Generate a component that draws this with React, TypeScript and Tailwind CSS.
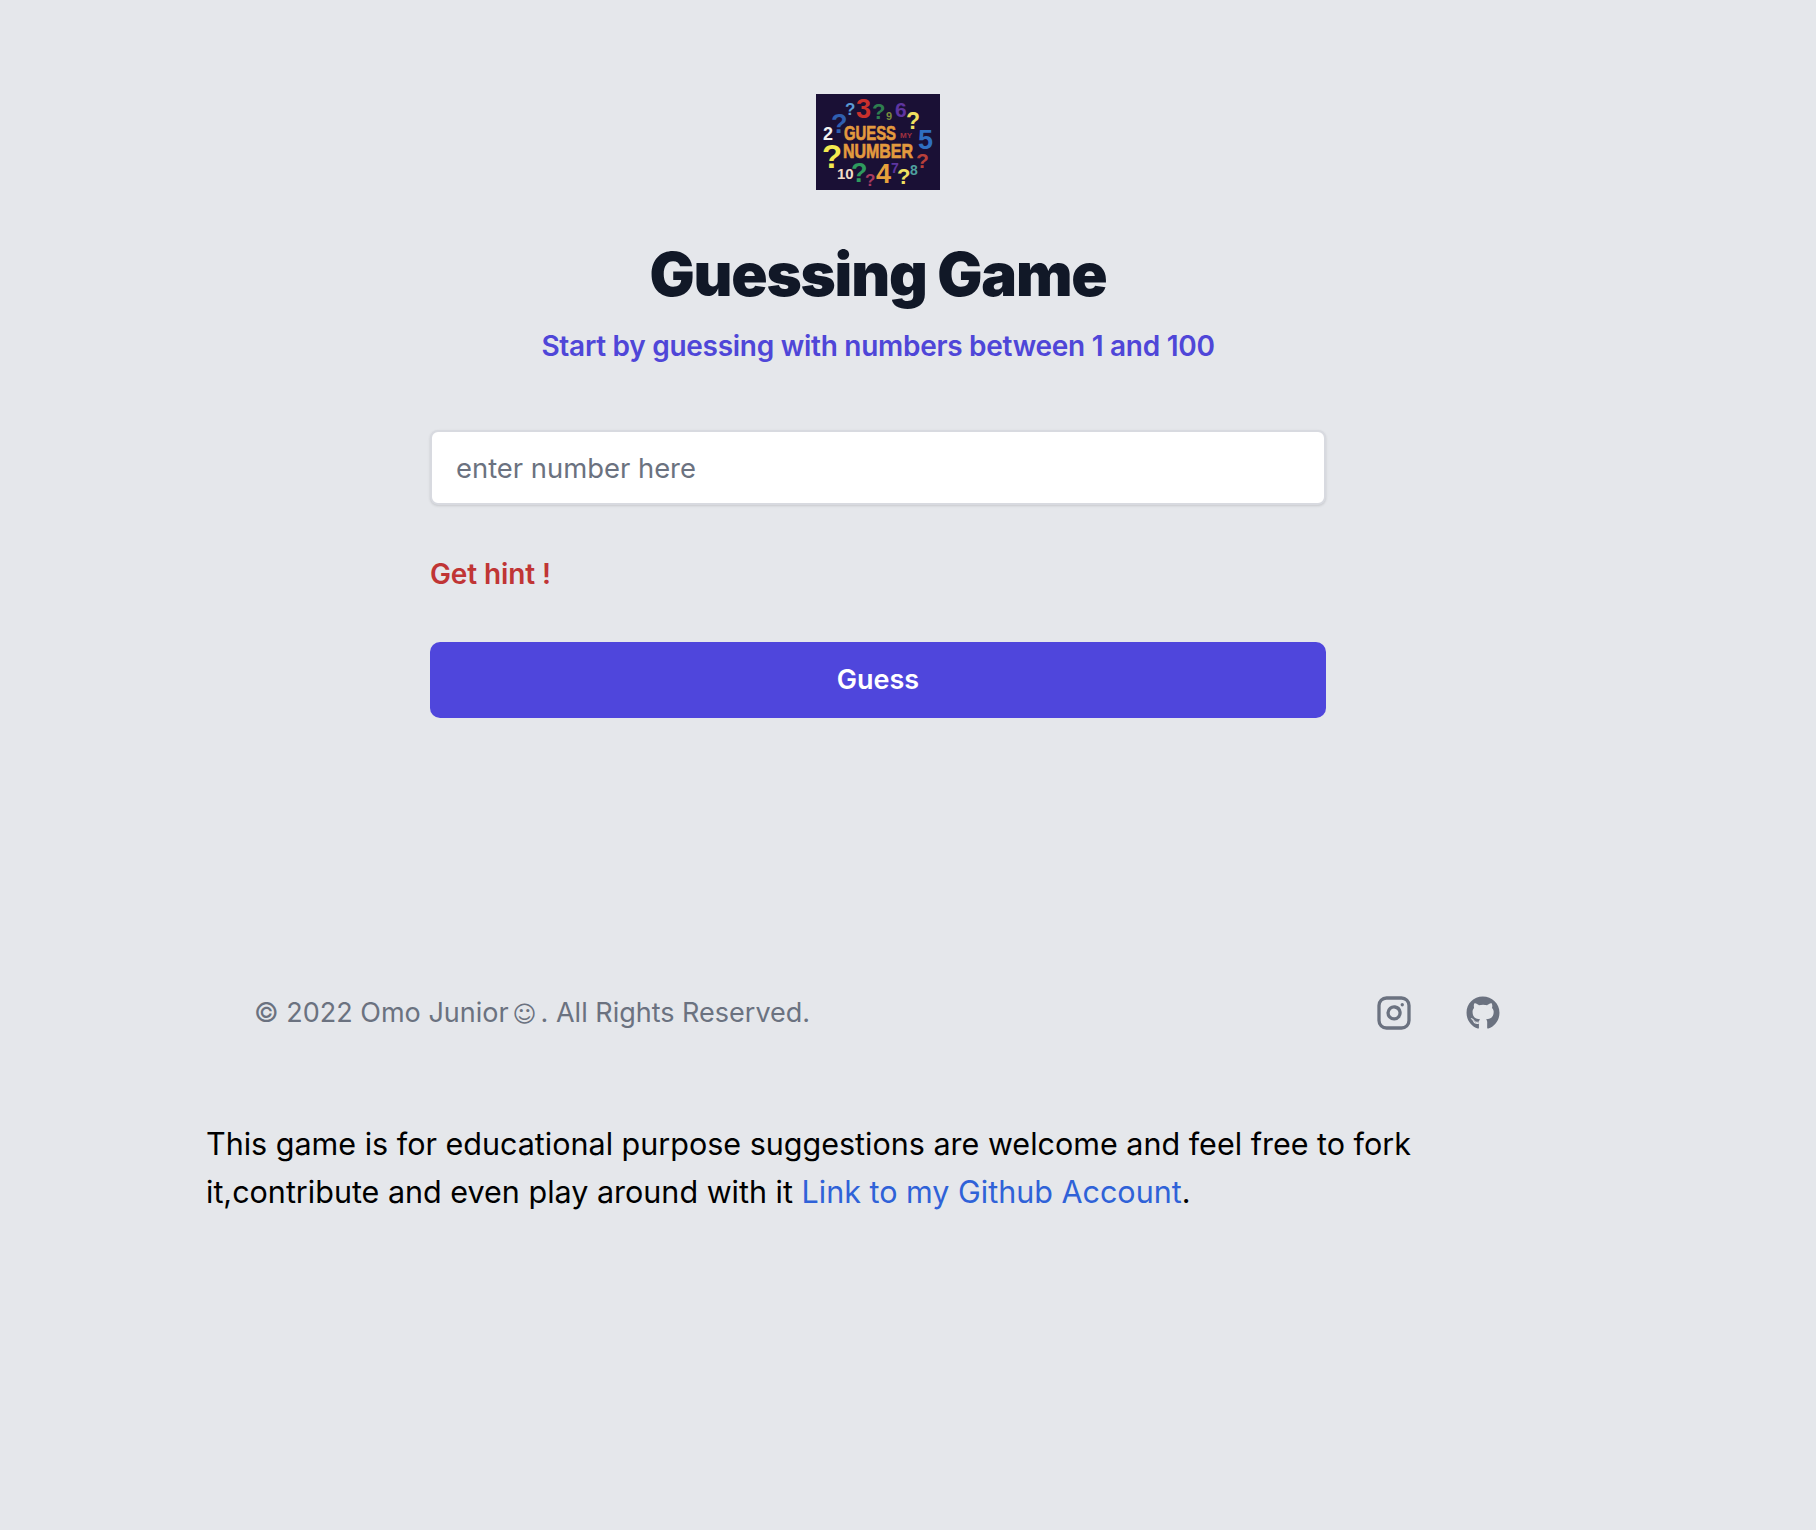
import { Instagram } from 'lucide-react';
import { FaGithub } from 'react-icons/fa';

const glyphs: [string, number, number, number, string][] = [
  ['?', 29, 21, 17, '#5b9bd5'],
  ['3', 40, 24, 27, '#c9302c'],
  ['?', 56, 25, 22, '#2e7d4f'],
  ['9', 70, 26, 11, '#7a8f3c'],
  ['6', 79, 23, 21, '#5e35a0'],
  ['?', 90, 35, 23, '#f0e060'],
  ['?', 15, 39, 27, '#2f5fb0'],
  ['2', 7, 46, 18, '#f2f2f2'],
  ['5', 102, 55, 27, '#2f6fc0'],
  ['?', 6, 74, 33, '#f4ea50'],
  ['?', 100, 74, 21, '#b8403a'],
  ['10', 21, 85, 15, '#f0dcc8'],
  ['?', 35, 88, 27, '#2e9a5e'],
  ['?', 49, 92, 17, '#a83a60'],
  ['4', 60, 89, 27, '#e8a13c'],
  ['7', 75, 79, 14, '#5e35a0'],
  ['?', 81, 90, 22, '#f0e060'],
  ['8', 94, 81, 14, '#4fa0a0'],
];

function Logo() {
  return (
    <svg width="124" height="96" viewBox="0 0 124 96" className="block font-['Liberation_Sans',sans-serif] font-bold">
      <rect width="124" height="96" fill="#1a1035" />
      {glyphs.map(([t, x, y, size, fill], i) => (
        <text key={i} x={x} y={y} fontSize={size} fill={fill}>{t}</text>
      ))}
      <text x="28" y="46" fontSize="21" fill="#e39a3e" stroke="#e39a3e" strokeWidth="0.7" textLength="52" lengthAdjust="spacingAndGlyphs">GUESS</text>
      <text x="84" y="44" fontSize="8" fill="#a03040" textLength="12" lengthAdjust="spacingAndGlyphs">MY</text>
      <text x="27" y="64" fontSize="21" fill="#e39a3e" stroke="#e39a3e" strokeWidth="0.7" textLength="70" lengthAdjust="spacingAndGlyphs">NUMBER</text>
    </svg>
  );
}

export default function App() {
  return (
    <div className="min-h-[1530px] bg-[#e5e7eb] font-['Inter',sans-serif]">
      <main className="flex w-[1756px] flex-col items-center pt-[94px]">
        <Logo />
        <h1 className="mt-[54px] text-[60px] leading-[60px] font-black tracking-[-1.2px] text-[#111827]">Guessing Game</h1>
        <p className="mt-[24px] text-[28px] leading-[36px] font-semibold tracking-[-0.28px] text-[#4f46d8]">Start by guessing with numbers between 1 and 100</p>
        <div className="mt-[66px] w-[896px]">
          <input
            placeholder="enter number here"
            className="block h-[75px] w-full rounded-lg border-2 border-[#d8dae0] bg-white px-[24px] text-[27.4px] text-[#111827] shadow-sm placeholder:text-[#6b7280]"
          />
          <p className="mt-[51px] text-[28px] leading-[36px] font-semibold tracking-[-0.1px] text-[#c03535]">Get hint !</p>
          <button className="mt-[50px] h-[76px] w-full rounded-[10px] bg-[#4f46dc] text-[27px] font-semibold text-white">Guess</button>
        </div>
      </main>
      <footer className="mt-[275px] ml-[254px] flex h-[40px] w-[1246px] items-center justify-between">
        <p className="text-[27px] leading-[40px] text-[#6b7280]">© 2022 Omo Junior<span className="mx-[4px] font-['DejaVu_Sans',sans-serif] text-[23px]">☺</span>. All Rights Reserved.</p>
        <div className="flex items-center gap-[54px]">
          <Instagram size={36} strokeWidth={2.2} className="text-[#6b7280]" />
          <FaGithub size={34} className="text-[#6b7280]" />
        </div>
      </footer>
      <p className="mt-[87px] ml-[206px] w-[1230px] text-[30.5px] leading-[48px] text-black">
        This game is for educational purpose suggestions are welcome and feel free to fork it,contribute and even play around with it <a className="text-[#2f62d8]">Link to my Github Account</a>.
      </p>
    </div>
  );
}
